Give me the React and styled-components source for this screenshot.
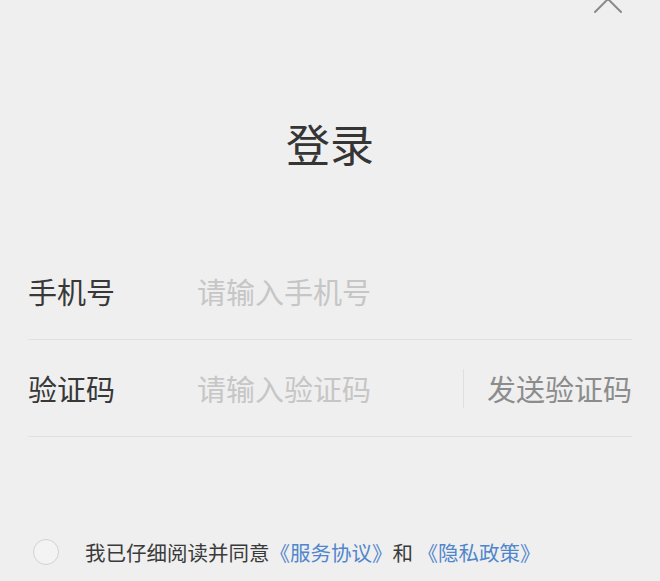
import React from "react";
import styled, { createGlobalStyle } from "styled-components";

const Global = createGlobalStyle`
  html, body { margin: 0; padding: 0; background: #efefef; }
  body { font-family: "Noto Sans CJK SC", "Noto Sans", sans-serif; }
  * { box-sizing: border-box; }
`;

const Page = styled.div`
  position: relative;
  height: 581px;
  overflow: hidden;
  background: #efefef;
  padding: 0 28px;
  display: flex;
  flex-direction: column;
`;

const CloseButton = styled.button`
  position: absolute;
  top: -16px;
  right: 37px;
  width: 30px;
  height: 30px;
  padding: 0;
  border: none;
  background: transparent;
  display: flex;
  align-items: center;
  justify-content: center;
`;

const Title = styled.h1`
  margin: 121px 0 0;
  font-size: 44px;
  line-height: 44px;
  font-weight: 400;
  color: #353535;
  text-align: center;
  letter-spacing: 0;
`;

const Form = styled.div`
  margin-top: 78px;
  display: flex;
  flex-direction: column;
`;

const Row = styled.div`
  height: 97px;
  display: flex;
  align-items: center;
  border-bottom: 1px solid #e0e0e0;
`;

const Label = styled.div`
  width: 169px;
  flex: none;
  font-size: 29px;
  line-height: 29px;
  color: #383838;
`;

const Input = styled.input`
  flex: 1;
  min-width: 0;
  border: none;
  outline: none;
  background: transparent;
  padding: 0;
  font-family: "Noto Sans CJK SC", "Noto Sans", sans-serif;
  font-size: 29px;
  line-height: 29px;
  color: #333;
  &::placeholder { color: #c6c6c6; }
`;

const Divider = styled.span`
  width: 1px;
  height: 39px;
  background: #e0e0e0;
  flex: none;
`;

const SendButton = styled.button`
  flex: none;
  width: 168px;
  border: none;
  background: transparent;
  padding: 0 0 0 23px;
  text-align: left;
  white-space: nowrap;
  font-family: "Noto Sans CJK SC", "Noto Sans", sans-serif;
  font-size: 29px;
  line-height: 29px;
  color: #8c8c8c;
`;

const Agreement = styled.label`
  margin-top: 102px;
  display: flex;
  align-items: center;
  height: 26px;
`;

const Circle = styled.span`
  width: 26px;
  height: 26px;
  margin-left: 5px;
  border-radius: 50%;
  border: 1.5px solid #d2d2d2;
  background: #f3f3f3;
  flex: none;
`;

const AgreeText = styled.span`
  margin-left: 26px;
  font-size: 20.5px;
  line-height: 26px;
  color: #3a3a3a;
  white-space: nowrap;
`;

const Link = styled.a`
  color: #4f86cc;
  text-decoration: none;
`;

export default function App() {
  return (
    <>
      <Global />
      <Page>
        <CloseButton aria-label="关闭">
          <svg width="30" height="30" viewBox="0 0 30 30">
            <path d="M2 2 L28 28 M28 2 L2 28" stroke="#8a8a8a" strokeWidth="2" fill="none" strokeLinecap="round" />
          </svg>
        </CloseButton>
        <Title>登录</Title>
        <Form>
          <Row>
            <Label>手机号</Label>
            <Input placeholder="请输入手机号" />
          </Row>
          <Row>
            <Label>验证码</Label>
            <Input placeholder="请输入验证码" />
            <Divider />
            <SendButton>发送验证码</SendButton>
          </Row>
        </Form>
        <Agreement>
          <Circle />
          <AgreeText>
            我已仔细阅读并同意<Link>《服务协议》</Link>和 <Link>《隐私政策》</Link>
          </AgreeText>
        </Agreement>
      </Page>
    </>
  );
}
